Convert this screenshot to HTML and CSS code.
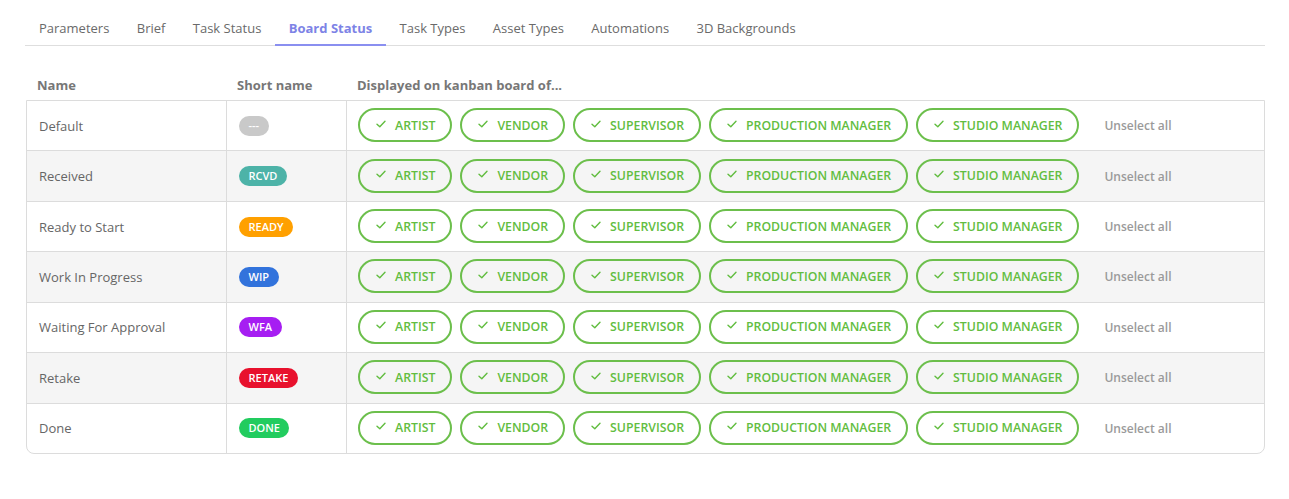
FILE: index.html
```html
<!DOCTYPE html>
<html>
<head>
<meta charset="utf-8">
<link rel="stylesheet" href="styles.css">
</head>
<body>
<div class="page">
  <nav class="tabs">
    <div class="tab">Parameters</div>
    <div class="tab">Brief</div>
    <div class="tab">Task Status</div>
    <div class="tab active">Board Status</div>
    <div class="tab">Task Types</div>
    <div class="tab">Asset Types</div>
    <div class="tab">Automations</div>
    <div class="tab">3D Backgrounds</div>
  </nav>

  <div class="table">
    <div class="head">
      <div class="hcell">Name</div>
      <div class="hcell">Short name</div>
      <div class="hcell">Displayed on kanban board of...</div>
    </div>
    <div class="body" id="body"></div>
  </div>
</div>
<script src="app.js"></script>
</body>
</html>
```

FILE: app.js
```js
const statuses = [
  ["Default", "---", "#c9c9c9"],
  ["Received", "RCVD", "#4db3a8"],
  ["Ready to Start", "READY", "#ffa000"],
  ["Work In Progress", "WIP", "#3273dc"],
  ["Waiting For Approval", "WFA", "#a61ef2"],
  ["Retake", "RETAKE", "#e8112d"],
  ["Done", "DONE", "#22cc5f"]
];
const roles = ["ARTIST", "VENDOR", "SUPERVISOR", "PRODUCTION MANAGER", "STUDIO MANAGER"];
const check = '<svg class="chk" width="10" height="8" viewBox="0 0 10 8"><path d="M1 4.2 L3.8 6.8 L9 1.2" fill="none" stroke="currentColor" stroke-width="1.4" stroke-linecap="round" stroke-linejoin="round"/></svg>';
const body = document.getElementById("body");
body.innerHTML = statuses.map(([name, short, color]) => `
  <div class="row">
    <div class="cell name">${name}</div>
    <div class="cell short"><span class="badge" style="background:${color}">${short}</span></div>
    <div class="cell roles">
      ${roles.map(r => `<span class="pill">${check}<span>${r}</span></span>`).join("")}
      <span class="unselect">Unselect all</span>
    </div>
  </div>`).join("");
```

FILE: styles.css
```css
* { box-sizing: border-box; }
html, body { margin: 0; padding: 0; background: #fff; }
body {
  font-family: "Open Sans", "Noto Sans", sans-serif;
  font-size: 13px;
  color: #666;
}
.page { padding: 0 24px 0 25px; }

.tabs {
  display: flex;
  height: 46px;
  border-bottom: 1px solid #dedede;
}
.tab {
  padding: 18px 13.7px 0;
  line-height: 20px;
  height: 46px;
  color: #6a6a6a;
  border-bottom: 2px solid transparent;
}
.tab:first-child { padding-left: 14px; }
.tab.active {
  color: #7d83e6;
  font-weight: 700;
  border-bottom-color: #8a8ff0;
}

.table { margin: 24px 0 0 1px; }
.head {
  display: grid;
  grid-template-columns: 201px 120px 1fr;
  height: 30px;
  align-items: center;
}
.hcell {
  padding-left: 10px;
  font-weight: 700;
  color: #777;
}
.hcell:first-child { padding-left: 11px; }
.body {
  border: 1px solid #dcdcdc;
  border-radius: 0 0 8px 8px;
  overflow: hidden;
}
.row {
  display: grid;
  grid-template-columns: 200px 120px 1fr;
  height: 50.43px;
  border-bottom: 1px solid #dcdcdc;
}
.row:last-child { border-bottom: none; height: 49.43px; }
.row:nth-child(even) { background: #f5f5f5; }
.cell {
  display: flex;
  align-items: center;
  padding-left: 12px;
}
.name, .short { border-right: 1px solid #dcdcdc; }
.name { color: #666; }
.short { padding-left: 12px; }
.badge {
  display: inline-block;
  height: 20px;
  line-height: 20px;
  padding: 0 9.5px;
  border-radius: 10px;
  color: #fff;
  font-size: 11px;
  font-weight: 600;
}
.roles { gap: 8px; padding-left: 11px; }
.pill {
  display: inline-flex;
  align-items: center;
  height: 34px;
  margin-top: -1px;
  padding: 0 15px 0 16px;
  border: 2px solid #6cbf4c;
  border-radius: 17px;
  color: #62bd40;
  font-size: 12.3px;
  font-weight: 600;
}
.chk { margin-right: 9px; margin-top: -3px; }
.unselect {
  margin-left: 17px;
  color: #9a9a9a;
  font-size: 12px;
  font-weight: 600;
}
```
